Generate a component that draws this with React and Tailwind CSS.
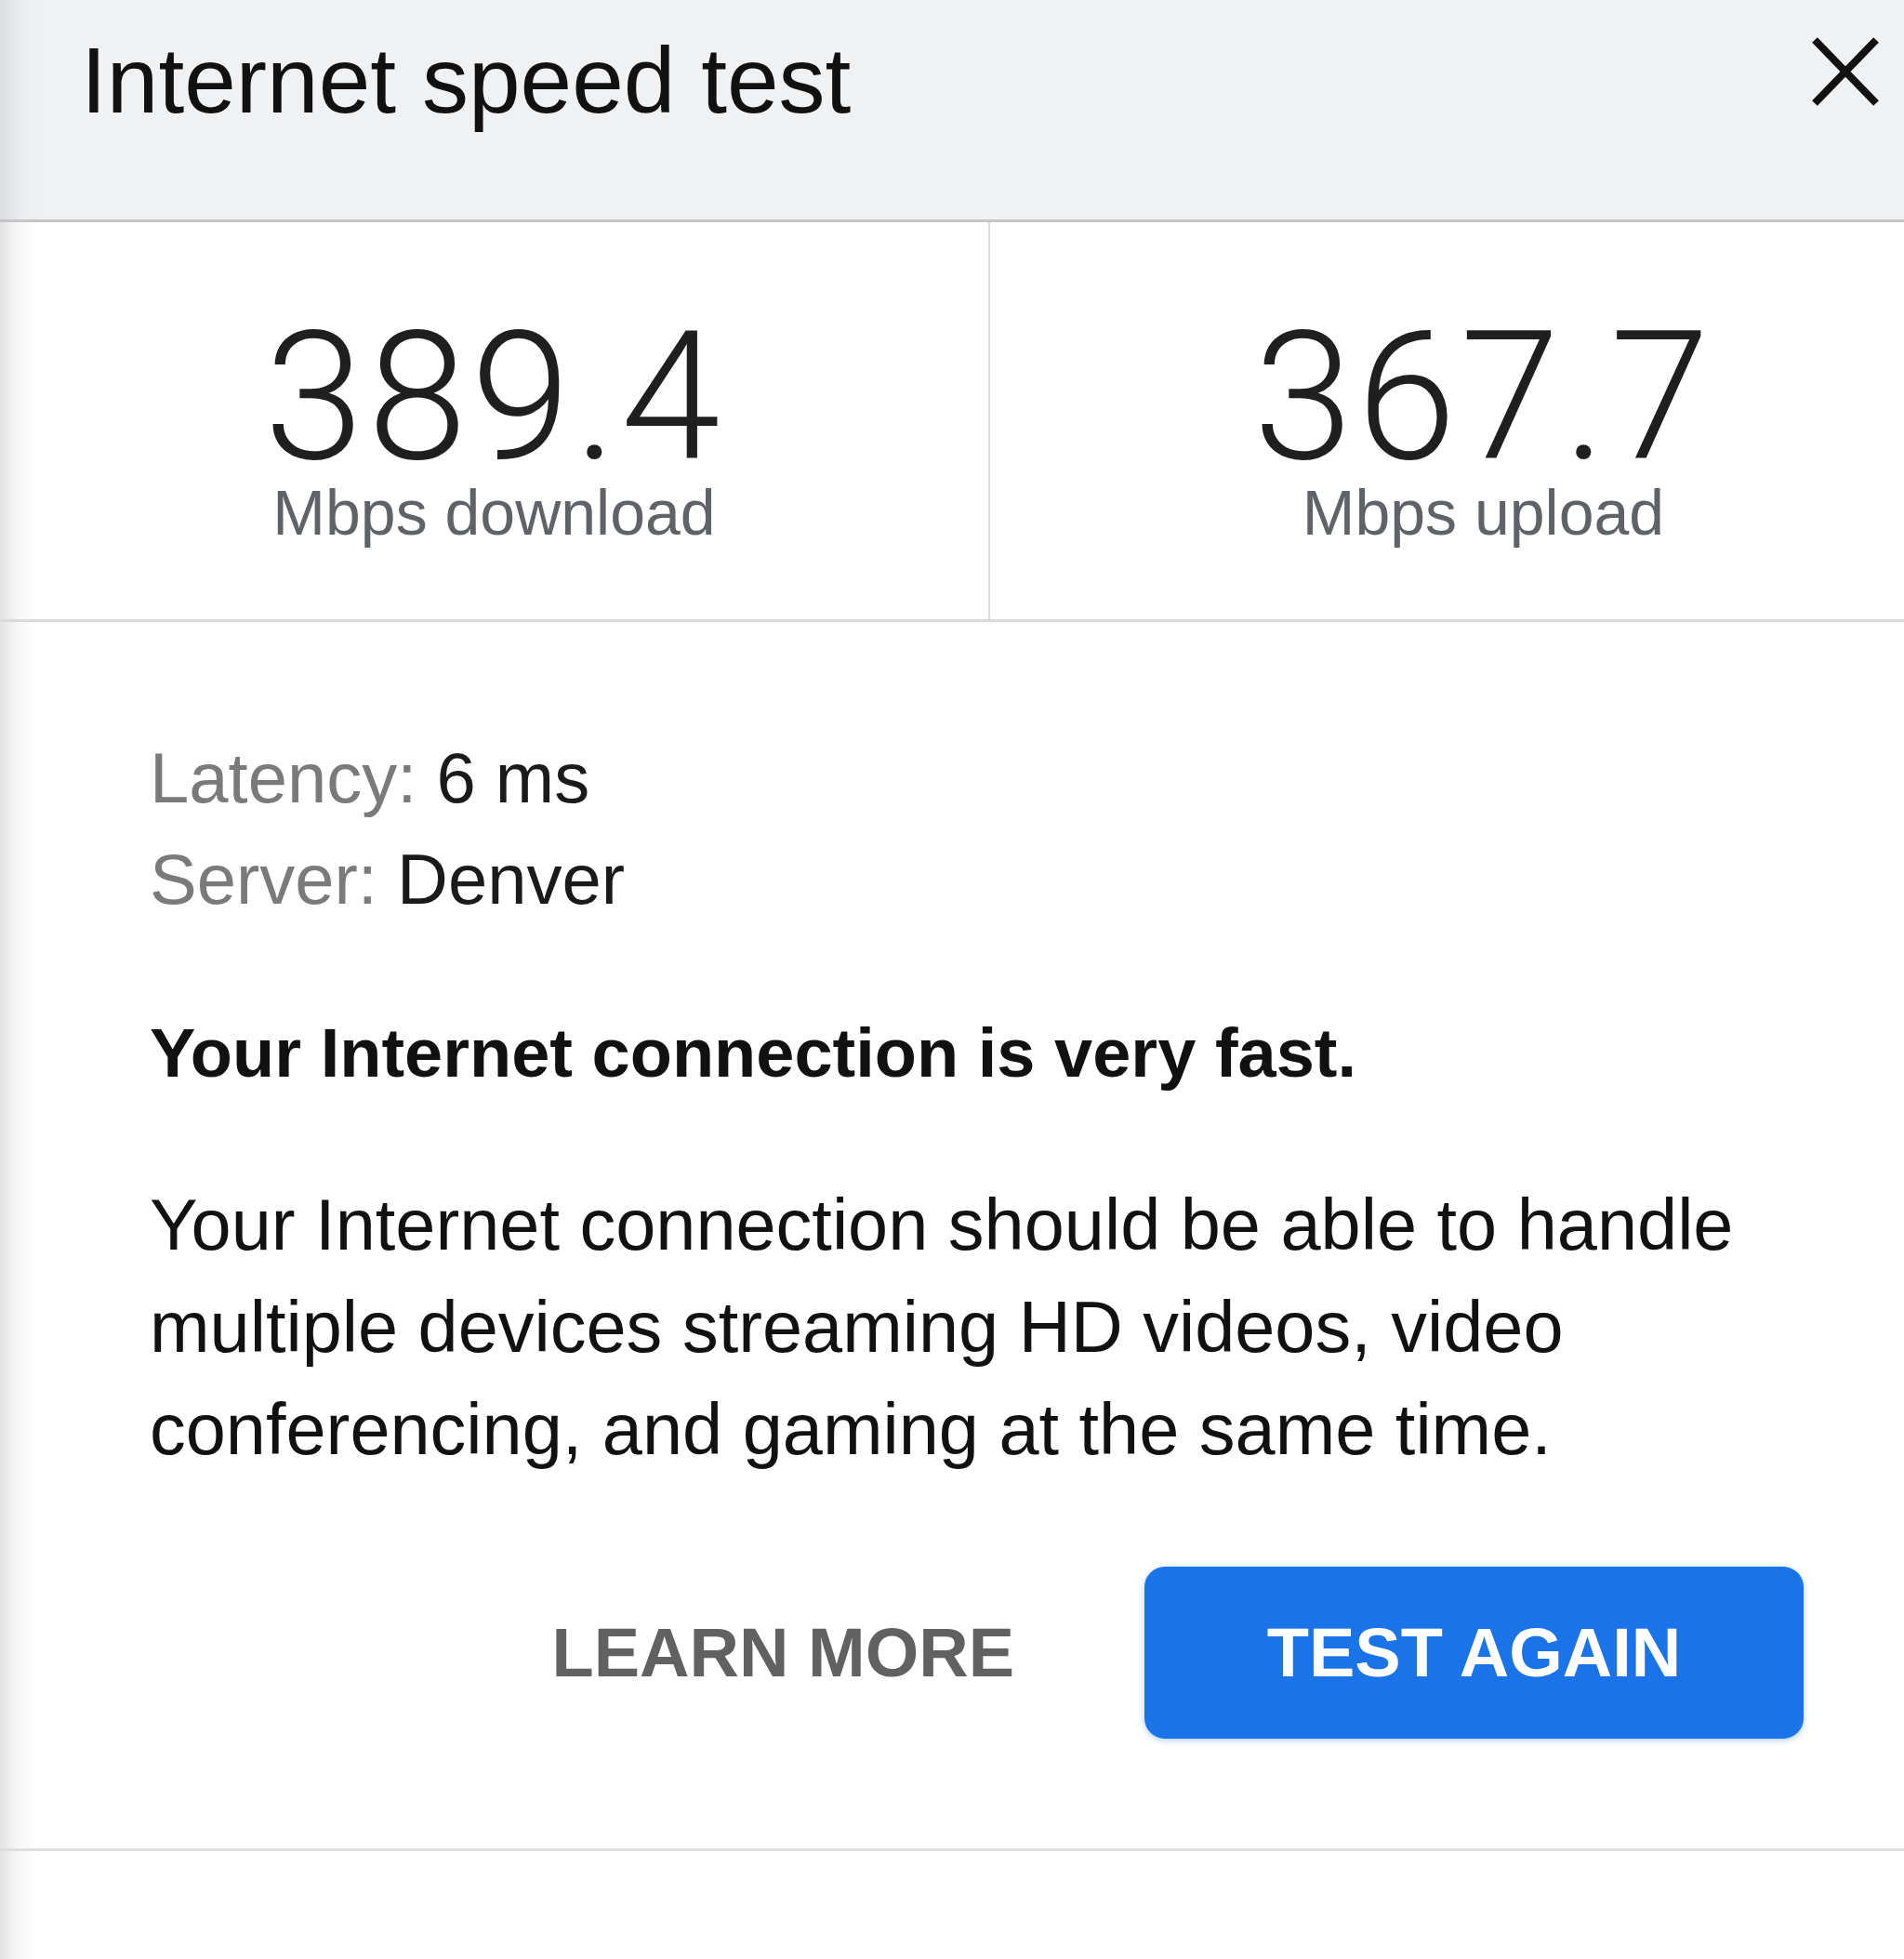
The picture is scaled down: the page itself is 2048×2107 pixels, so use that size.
import React from 'react';

const sans = { fontFamily: '"Liberation Sans", Arial, sans-serif' };

function CloseIcon() {
  return (
    <svg width="76" height="78" viewBox="0 0 76 78" className="mt-[38px] shrink-0">
      <path d="M5 5 L71 73 M71 5 L5 73" stroke="#111" strokeWidth="8" strokeLinecap="butt" fill="none" />
    </svg>
  );
}

function Stat({ value, label, className = '' }) {
  return (
    <div className={`flex flex-col items-center pt-[111px] ${className}`}>
      <div className="font-['Roboto','Liberation_Sans',sans-serif] text-[193px] font-light leading-[0.8] tracking-[4px] text-[#1f1f1f]">
        {value}
      </div>
      <div className="mt-[13px] text-[68px] leading-none text-[#5f6368]">{label}</div>
    </div>
  );
}

export default function App() {
  return (
    <div
      style={sans}
      className="min-h-[2107px] w-full overflow-hidden bg-[linear-gradient(to_right,#e4e4e5_0px,#f7f7f7_20px,#ffffff_40px)]"
    >
      <header className="flex h-[236px] items-start justify-between bg-[linear-gradient(to_right,#dcdde0_0px,#eceef0_25px,#f0f1f3_50px)] pl-[87px] pr-[25px]">
        <h1 className="pt-[36px] text-[100px] font-normal leading-none text-[#111]">Internet speed test</h1>
        <CloseIcon />
      </header>
      <div className="h-[3px] bg-[#c4c4c6]" />

      <section className="grid h-[427px] grid-cols-[1065px_1fr]">
        <Stat value="389.4" label="Mbps download" className="border-r-2 border-[#d9d9d9]" />
        <Stat value="367.7" label="Mbps upload" className="pl-[78px]" />
      </section>
      <div className="h-[3px] bg-[#dadada]" />

      <main className="pl-[161px] pt-[113px]">
        <div className="text-[76px] leading-[109px]">
          <div>
            <span className="text-[#7a7a7a]">Latency:</span> <span className="text-[#1a1a1a]">6 ms</span>
          </div>
          <div>
            <span className="text-[#7a7a7a]">Server:</span> <span className="text-[#1a1a1a]">Denver</span>
          </div>
        </div>

        <p className="mt-[78px] text-[74px] font-bold leading-[109px] text-[#111]">
          Your Internet connection is very fast.
        </p>

        <p className="mt-[75px] max-w-[1790px] text-[77.5px] leading-[110px] text-[#111]">
          Your Internet connection should be able to handle multiple devices streaming HD videos, video
          conferencing, and gaming at the same time.
        </p>

        <div className="mt-[93px] flex items-center justify-end gap-[140px] pr-[108px]">
          <button className="text-[74px] font-bold leading-none text-[#616161]">LEARN MORE</button>
          <button className="flex h-[185px] w-[709px] items-center justify-center rounded-[22px] bg-[#1a73e8] text-[74px] font-bold leading-none text-white shadow-[0_2px_6px_rgba(26,115,232,0.35)]">
            TEST AGAIN
          </button>
        </div>
      </main>

      <div className="mt-[118px] h-[3px] bg-[#dedede]" />
    </div>
  );
}
